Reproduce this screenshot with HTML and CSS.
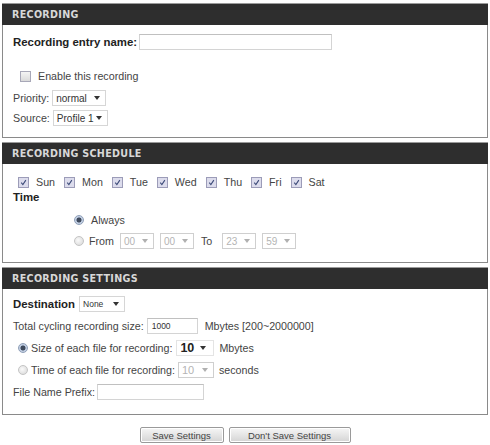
FILE: index.html
```html
<!DOCTYPE html>
<html>
<head>
<meta charset="utf-8">
<link rel="stylesheet" href="styles.css">
</head>
<body>
<div class="wrap">
  <section class="panel">
    <div class="panel-head">RECORDING</div>
    <div class="panel-body body-rec">
      <div class="row row-name"><span class="lbl-b">Recording entry name:</span><span class="inp inp-name"></span></div>
      <div class="row row-enable"><span class="cb"></span><span class="lbl">Enable this recording</span></div>
      <div class="row row-20"><span class="lbl">Priority:</span><span class="sel sel-pri">normal<i class="arr"></i></span></div>
      <div class="row row-20"><span class="lbl">Source:</span><span class="sel sel-src">Profile 1<i class="arr"></i></span></div>
    </div>
  </section>

  <section class="panel">
    <div class="panel-head">RECORDING SCHEDULE</div>
    <div class="panel-body body-sched">
      <div class="row days">
        <span class="day"><span class="cb on"><svg viewBox="0 0 10 10"><path d="M2.5 5.2 L4.3 7.3 L7.6 2.4" fill="none" stroke="#3c4a78" stroke-width="1.2"/></svg></span>Sun</span>
        <span class="day"><span class="cb on"><svg viewBox="0 0 10 10"><path d="M2.5 5.2 L4.3 7.3 L7.6 2.4" fill="none" stroke="#3c4a78" stroke-width="1.2"/></svg></span>Mon</span>
        <span class="day"><span class="cb on"><svg viewBox="0 0 10 10"><path d="M2.5 5.2 L4.3 7.3 L7.6 2.4" fill="none" stroke="#3c4a78" stroke-width="1.2"/></svg></span>Tue</span>
        <span class="day"><span class="cb on"><svg viewBox="0 0 10 10"><path d="M2.5 5.2 L4.3 7.3 L7.6 2.4" fill="none" stroke="#3c4a78" stroke-width="1.2"/></svg></span>Wed</span>
        <span class="day"><span class="cb on"><svg viewBox="0 0 10 10"><path d="M2.5 5.2 L4.3 7.3 L7.6 2.4" fill="none" stroke="#3c4a78" stroke-width="1.2"/></svg></span>Thu</span>
        <span class="day"><span class="cb on"><svg viewBox="0 0 10 10"><path d="M2.5 5.2 L4.3 7.3 L7.6 2.4" fill="none" stroke="#3c4a78" stroke-width="1.2"/></svg></span>Fri</span>
        <span class="day"><span class="cb on"><svg viewBox="0 0 10 10"><path d="M2.5 5.2 L4.3 7.3 L7.6 2.4" fill="none" stroke="#3c4a78" stroke-width="1.2"/></svg></span>Sat</span>
      </div>
      <div class="row row-time"><span class="lbl-b">Time</span></div>
      <div class="row row-always"><span class="rd on"></span><span class="lbl">Always</span></div>
      <div class="row row-from">
        <span class="rd"></span><span class="lbl">From</span>
        <span class="sel dis sel-t">00<i class="arr"></i></span>
        <span class="sel dis sel-t">00<i class="arr"></i></span>
        <span class="lbl">To</span>
        <span class="sel dis sel-t">23<i class="arr"></i></span>
        <span class="sel dis sel-t">59<i class="arr"></i></span>
      </div>
    </div>
  </section>

  <section class="panel">
    <div class="panel-head">RECORDING SETTINGS</div>
    <div class="panel-body body-set">
      <div class="row row-22"><span class="lbl-b">Destination</span><span class="sel sel-dest">None<i class="arr"></i></span></div>
      <div class="row row-22"><span class="lbl">Total cycling recording size:</span><span class="inp inp-size">1000</span><span class="lbl">Mbytes [200~2000000]</span></div>
      <div class="row row-22 row-rd"><span class="rd on"></span><span class="lbl">Size of each file for recording:</span><span class="sel sel-big">10<i class="arr"></i></span><span class="lbl">Mbytes</span></div>
      <div class="row row-22 row-rd"><span class="rd"></span><span class="lbl">Time of each file for recording:</span><span class="sel dis sel-mid">10<i class="arr"></i></span><span class="lbl">seconds</span></div>
      <div class="row row-22"><span class="lbl">File Name Prefix:</span><span class="inp inp-prefix"></span></div>
    </div>
  </section>

  <div class="buttons">
    <span class="btn btn-save">Save Settings</span>
    <span class="btn btn-dont">Don't Save Settings</span>
  </div>
</div>
</body>
</html>
```

FILE: styles.css
```css
* { box-sizing: border-box; }
html, body { margin: 0; padding: 0; background: #fff; }
body {
  width: 490px;
  height: 445px;
  overflow: hidden;
  font-family: "Liberation Sans", Arial, sans-serif;
  font-size: 10.7px;
  color: #444;
}
.wrap { padding: 3px 2px 0 2px; }

.panel {
  border: 1px solid #8a8a8a;
  border-top: none;
  margin-bottom: 4px;
  background: #fff;
}
.panel-head {
  height: 22px;
  line-height: 21px;
  background: #2e2e2e;
  border-top: 1px solid #9a9a9a;
  color: #d8d8d8;
  font-family: "DejaVu Sans", Verdana, sans-serif;
  font-weight: bold;
  font-size: 9.6px;
  letter-spacing: 0.3px;
  padding-left: 10px;
  margin: 0 -1px;
}
.panel-body { padding-left: 10px; }

.row { display: flex; align-items: center; }
.row-20 { height: 20px; }
.row-22 { height: 22px; }

.lbl { white-space: nowrap; }
.lbl-b { font-weight: bold; font-size: 11.4px; color: #222; white-space: nowrap; }

/* recording */
.body-rec { padding-top: 8px; padding-bottom: 9px; }
.row-name { height: 18px; gap: 2px; }
.inp {
  display: inline-block;
  height: 16px;
  border: 1px solid #d4d4d4;
  border-top-color: #c0c0c0;
  background: #fff;
  font-size: 8.5px;
  line-height: 14px;
  padding-left: 4px;
  color: #333;
}
.inp-name { width: 193px; }
.row-enable { height: 18px; margin-top: 16px; padding-left: 7px; gap: 7px; }
.row-enable + .row-20 { margin-top: 3px; }

.cb {
  display: inline-block;
  width: 11px;
  height: 11px;
  border: 1px solid #a8a8b8;
  background: linear-gradient(#f4f4f4, #dadada);
  flex: none;
}
.cb.on { background: #dcdcec; border-color: #9c9cb8; }
.cb svg { display: block; width: 9px; height: 9px; }

.sel {
  display: inline-flex;
  align-items: center;
  height: 16px;
  border: 1px solid #d6d6d6;
  background: #fff;
  padding-left: 3px;
  margin-left: 3px;
  font-size: 10px;
  color: #333;
}
.arr {
  display: inline-block;
  width: 0; height: 0;
  border-left: 3px solid transparent;
  border-right: 3px solid transparent;
  border-top: 4px solid #333;
  margin-left: auto;
  margin-right: 5px;
}
.sel-pri { width: 54px; }
.sel-src { width: 55px; }

/* schedule */
.body-sched { padding-top: 9px; padding-bottom: 12px; }
.days { height: 18px; padding-left: 5px; gap: 5px; }
.day { display: inline-flex; align-items: center; gap: 7px; margin-right: 4px; }
.row-time { height: 12px; }
.row-always { height: 18px; margin-top: 8px; padding-left: 61px; gap: 7px; }
.row-from { height: 18px; margin-top: 3px; padding-left: 61px; gap: 0; }
.row-from .lbl { margin: 0 4px 0 7px; }
.row-from .lbl:nth-of-type(2) { margin: 0 0 0 5px; }

.rd {
  display: inline-block;
  width: 10px; height: 10px;
  border-radius: 50%;
  border: 1px solid #c4c4c4;
  background: radial-gradient(circle at 40% 40%, #fafafa, #d6d6d6);
  flex: none;
}
.rd.on {
  border-color: #8f9fb8;
  background: radial-gradient(circle, #3f4a5c 0 2.2px, #b8c6dc 2.8px, #dce4f0 100%);
}

.sel.dis { color: #b4b4b4; border-color: #cfcfcf; }
.sel.dis .arr { border-top-color: #b0b0b0; }
.sel-t { width: 34px; margin-left: 6px; }
.row-from .sel-t:first-of-type { margin-left: 4px; }

/* settings */
.body-set { padding-top: 4px; padding-bottom: 11px; }
.sel-dest { width: 46px; font-size: 8.5px; margin-left: 4px; }
.inp-size { width: 51px; margin-left: 3px; margin-right: 7px; }
.row-rd { padding-left: 5px; }
.row-rd .rd { margin-right: 3px; }
.row-rd .lbl:first-of-type { font-size: 10.9px; }
.sel-big { width: 38px; font-weight: bold; font-size: 12.5px; color: #222; margin-left: 4px; margin-right: 5px; border-color: #e4e4e4; }
.sel-big .arr { margin-right: 7px; }
.sel-mid { width: 36px; margin-left: 3px; margin-right: 5px; font-size: 11px; }
.inp-prefix { width: 107px; margin-left: 2px; }

/* buttons */
.buttons {
  display: flex;
  justify-content: center;
  gap: 5px;
  margin-top: 12px;
}
.btn {
  display: inline-flex;
  align-items: center;
  justify-content: center;
  height: 16px;
  border: 1px solid #9a9a9a;
  border-radius: 2px;
  background: linear-gradient(#f6f6f6, #d4d4d4);
  font-size: 9.5px;
  color: #444;
  box-shadow: inset 0 0 0 1px #fff;
}
.btn-save { width: 84px; }
.btn-dont { width: 122px; }
```
